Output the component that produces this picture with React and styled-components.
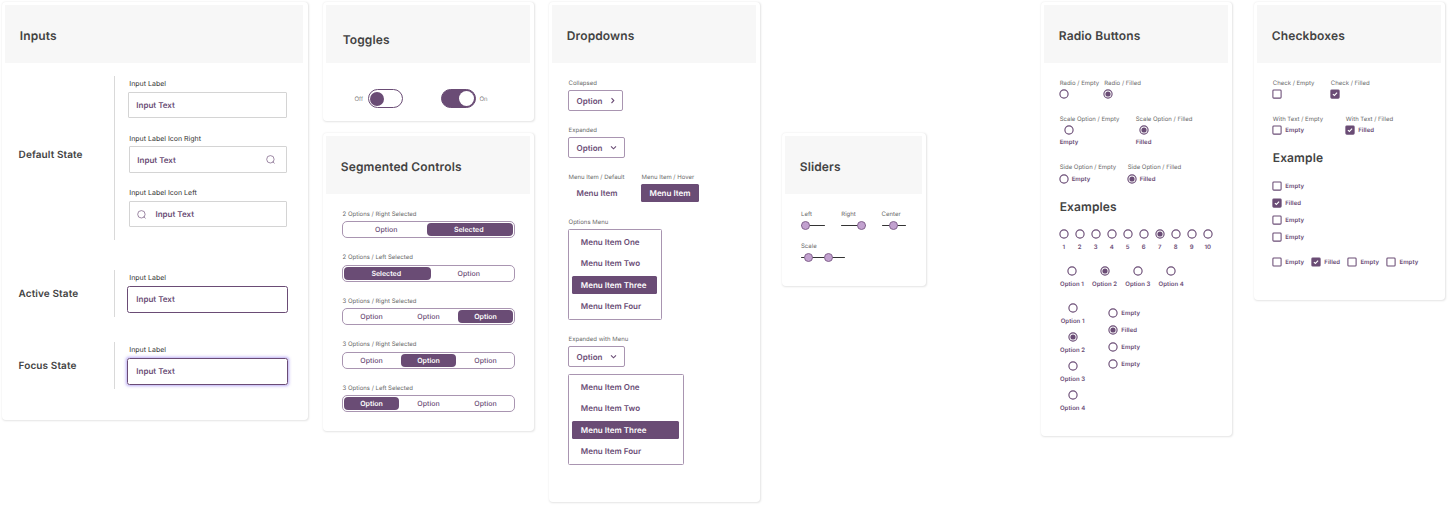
import React from "react";
import styled, { createGlobalStyle, ThemeProvider, css } from "styled-components";

const theme = {
  purple: "#6a4c75",
  outline: "#a995b1",
  lilac: "#c2a1cf",
  ink: "#434343",
  caption: "#6a6a6a",
  line: "#d9d9d9",
};

const GlobalStyle = createGlobalStyle`
  * { box-sizing: border-box; }
  body {
    margin: 0;
    background: #fff;
    font-family: Inter, "Liberation Sans", sans-serif;
    text-rendering: geometricPrecision;
    overflow: hidden;
  }
`;

/* ---------- page and cards ---------- */

const Page = styled.main`
  display: flex;
  align-items: flex-start;
  width: 1448px;
  height: 505px;
  padding: 2px 3px 0 2px;
  white-space: nowrap;
`;

const Column = styled.div`
  display: flex;
  flex-direction: column;
  gap: 12px;
  flex: none;
  width: ${(p) => p.$width}px;
  margin-left: ${(p) => p.$gap || 0}px;
  margin-top: ${(p) => p.$drop || 0}px;
`;

const Card = styled.section`
  height: ${(p) => p.$height}px;
  padding: 3px ${(p) => p.$right || 4}px 0 3px;
  background: #fff;
  border-radius: 4px;
  box-shadow: 0.8px 0.8px 2px rgba(0, 0, 0, 0.11);
`;

const CardHeader = styled.header`
  display: flex;
  align-items: center;
  height: 58px;
  padding: ${(p) => (p.$low ? "12px 0 0 16.7px" : "3px 0 0 14.8px")};
  background: #f7f7f7;
`;

const Title = styled.h2`
  margin: 0;
  font-size: 12px;
  line-height: 14px;
  font-weight: 600;
  letter-spacing: 0.12px;
  color: ${(p) => p.theme.ink};
`;

const ExampleTitle = styled(Title)`
  margin: ${(p) => p.$top}px 0 ${(p) => p.$bottom}px;
`;

const Caption = styled.div`
  height: 10px;
  font-size: 6px;
  line-height: 12px;
  font-weight: 400;
  color: ${(p) => p.theme.caption};
`;

/* ---------- inputs ---------- */

const StateGroup = styled.div`
  display: flex;
  height: ${(p) => p.$height}px;
  margin-top: ${(p) => p.$top}px;
`;

const StateName = styled.h3`
  display: flex;
  align-items: center;
  width: 109px;
  margin: 0;
  padding: 1.4px 0 ${(p) => p.$lift || 0}px 13.6px;
  font-size: 10px;
  line-height: 12px;
  font-weight: 600;
  letter-spacing: 0.1px;
  color: ${(p) => p.theme.ink};
`;

const Fields = styled.div`
  display: flex;
  flex-direction: column;
  border-left: 1px solid ${(p) => p.theme.line};
  padding: 2px 0 0 12px;
`;

const Field = styled.label`
  display: block;
  margin-top: ${(p) => p.$top || 0}px;
`;

const FieldLabel = styled.span`
  display: block;
  height: 10px;
  padding-left: 2.3px;
  font-size: 7px;
  line-height: 12px;
  font-weight: 400;
  color: #333;
`;

const InputBox = styled.span`
  display: flex;
  align-items: center;
  width: ${(p) => (p.$icon ? 158 : 159)}px;
  height: ${(p) => p.$height || 26}px;
  margin: ${(p) => p.$gap || 4}px 0 0 ${(p) => (p.$icon ? 2 : 1)}px;
  padding: 0 11px 0 7.3px;
  border: 1px solid #d4d4d4;
  border-radius: 1px;
  font-size: 8px;
  font-weight: 600;
  color: ${(p) => p.theme.purple};
  ${(p) =>
    p.$strong &&
    css`
      width: 161px;
      height: 27px;
      margin-left: 0;
      padding: 0 0 1px 8.3px;
      border-color: ${p.theme.purple};
      border-radius: 2.5px;
    `}
  ${(p) => p.$focus && "box-shadow: 0 0 3px 0.5px rgba(120, 90, 235, 0.5);"}
  ${(p) => p.$icon === "right" && "justify-content: space-between;"}
  ${(p) => p.$icon === "left" && "gap: 9.2px;"}
`;

const SearchIcon = () => (
  <svg width="9" height="9" viewBox="0 0 9 9" fill="none" stroke={theme.purple} strokeWidth="0.65">
    <circle cx="4.4" cy="4.3" r="3.7" />
    <path d="M7 6.9 8.4 8.3" strokeLinecap="round" />
  </svg>
);

/* ---------- toggles ---------- */

const ToggleRow = styled.div`
  display: flex;
  align-items: center;
  height: 19px;
  margin-top: 26px;
  padding-left: 28.5px;
`;

const ToggleText = styled.span`
  width: 9px;
  padding-top: 1px;
  font-size: 6px;
  font-weight: 300;
  color: #555;
`;

const Switch = styled.span`
  display: flex;
  justify-content: ${(p) => (p.$on ? "flex-end" : "flex-start")};
  align-items: center;
  width: 34.5px;
  height: 19px;
  margin: ${(p) => (p.$on ? "0 4px 0 38.5px" : "0 0 0 4.5px")};
  padding: 0 1px;
  border: 1px solid ${(p) => p.theme.purple};
  border-radius: 10px;
  background: ${(p) => (p.$on ? p.theme.purple : "#fff")};

  &::after {
    content: "";
    width: ${(p) => (p.$on ? 15 : 14)}px;
    height: ${(p) => (p.$on ? 15 : 14)}px;
    border-radius: 50%;
    background: ${(p) => (p.$on ? "#fff" : p.theme.purple)};
  }
`;

/* ---------- segmented controls ---------- */

const SegmentList = styled.div`
  padding: 14.5px 0 0 16px;
`;

const SegmentBlock = styled.div`
  height: 43.5px;

  ${Caption} {
    padding-left: 0.6px;
  }
`;

const Segments = styled.div`
  display: grid;
  grid-template-columns: repeat(${(p) => p.$count}, 1fr);
  width: 173px;
  height: 17px;
  margin-top: 2.5px;
  padding: ${(p) => (p.$count === 2 ? "1px 4px 1px 2px" : "1px 0")};
  border: 1px solid ${(p) => p.theme.outline};
  border-radius: 5px;
`;

const Segment = styled.span`
  display: flex;
  align-items: center;
  justify-content: center;
  font-size: 7px;
  font-weight: ${(p) => (p.$on ? 600 : 500)};
  color: ${(p) => (p.$on ? "#fff" : p.theme.purple)};
  border-radius: 4px;
  ${(p) => p.$on && `background: ${p.theme.purple};`}
  ${(p) => p.$on && (p.$wide ? "margin: 0 -3px 0 -1px; padding: 0 3px 0 1px;" : "margin: 0 1px;")}
`;

const SEGMENTS = [
  ["2 Options / Right Selected", ["Option", "Selected"], 1],
  ["2 Options / Left Selected", ["Selected", "Option"], 0],
  ["3 Options / Right Selected", ["Option", "Option", "Option"], 2],
  ["3 Options / Right Selected", ["Option", "Option", "Option"], 1],
  ["3 Options / Left Selected", ["Option", "Option", "Option"], 0],
];

/* ---------- dropdowns ---------- */

const DropdownBody = styled.div`
  padding: 15px 0 0 16px;
`;

const DropdownBlock = styled.div`
  margin-bottom: ${(p) => p.$bottom || 14}px;

  ${Caption} {
    padding-left: 0.6px;
    margin-bottom: 2px;
  }
`;

const DropdownButton = styled.span`
  display: flex;
  align-items: center;
  justify-content: space-between;
  width: ${(p) => (p.$open ? 57 : 55)}px;
  height: 21px;
  padding: 0 ${(p) => (p.$open ? 7 : 6)}px 0 7.6px;
  border: 1px solid ${(p) => p.theme.outline};
  border-radius: 2px;
  font-size: 8px;
  font-weight: 600;
  color: ${(p) => p.theme.purple};
`;

const Chevron = ({ open }) => (
  <svg width="7" height="7" viewBox="0 0 7 7" fill="none" stroke={theme.purple} strokeWidth="1.1">
    <path d={open ? "M1 2.4 3.5 4.8 6 2.4" : "M2.5 1.2 4.8 3.6 2.5 6"} />
  </svg>
);

const MenuPair = styled.div`
  display: flex;

  > ${DropdownBlock} {
    width: 73px;
  }
`;

const MenuItem = styled.span`
  display: flex;
  align-items: center;
  height: 18px;
  padding: 0 8.5px;
  border-radius: 1.5px;
  font-size: 8px;
  font-weight: 600;
  color: ${(p) => (p.$on ? "#fff" : p.theme.purple)};
  ${(p) => p.$on && `background: ${p.theme.purple};`}
`;

const LoneItem = styled(MenuItem)`
  width: 57.5px;
`;

const Menu = styled.div`
  display: flex;
  flex-direction: column;
  gap: 3.4px;
  width: ${(p) => p.$width}px;
  height: 91px;
  margin-top: ${(p) => p.$top || 0}px;
  padding: 3px 4px 3px 3.3px;
  border: 1px solid ${(p) => p.theme.outline};
  border-radius: 1.5px;
`;

const OptionsMenu = ({ width, top }) => (
  <Menu $width={width} $top={top}>
    {["One", "Two", "Three", "Four"].map((n) => (
      <MenuItem key={n} $on={n === "Three"}>
        Menu Item {n}
      </MenuItem>
    ))}
  </Menu>
);

/* ---------- sliders ---------- */

const SliderRow = styled.div`
  display: flex;
  padding: ${(p) => p.$top}px 0 0 16px;
`;

const SliderCell = styled.div`
  width: 40.3px;
`;

const Track = styled.div`
  position: relative;
  width: ${(p) => p.$width}px;
  height: 1.4px;
  margin-top: 6px;
  border-radius: 1px;
  background: #333;
`;

const Thumb = styled.span`
  position: absolute;
  top: 50%;
  left: ${(p) => p.$at}px;
  width: 9px;
  height: 9px;
  margin: -4.5px 0 0 -4.5px;
  border: 1px solid #84648f;
  border-radius: 50%;
  background: ${(p) => p.theme.lilac};
`;

const Slider = ({ name, width, thumbs }) => (
  <SliderCell>
    <Caption>{name}</Caption>
    <Track $width={width}>
      {thumbs.map((t) => (
        <Thumb key={t} $at={t} />
      ))}
    </Track>
  </SliderCell>
);

/* ---------- radios and checkboxes ---------- */

const Glyph = styled.svg`
  display: block;
  flex: none;
`;

const Radio = ({ on }) => (
  <Glyph width="10" height="10" viewBox="0 0 10 10">
    <circle cx="5" cy="5" r="4.1" fill="none" stroke={theme.purple} strokeWidth="1.15" />
    {on && <circle cx="5" cy="5" r="2.6" fill={theme.purple} />}
  </Glyph>
);

const Check = ({ on }) => (
  <Glyph width="10" height="10" viewBox="0 0 10 10">
    <rect
      x="0.9"
      y="0.9"
      width="8.2"
      height="8.2"
      rx="0.9"
      fill={on ? theme.purple : "none"}
      stroke={theme.purple}
      strokeWidth="1.05"
    />
    {on && <path d="M2.9 5.1 4.4 6.5 7.1 3.7" fill="none" stroke="#fff" strokeWidth="1.1" />}
  </Glyph>
);

const ChoiceBody = styled.div`
  padding: 15px 0 0 ${(p) => p.$left}px;
`;

const SampleRow = styled.div`
  display: flex;
  height: ${(p) => p.$height}px;
`;

const Sample = styled.div`
  width: ${(p) => p.$width}px;
`;

const SampleMark = styled.div`
  margin: ${(p) => p.$top ?? 1}px 0 0 ${(p) => p.$left ?? -1}px;
`;

const ChoiceText = styled.span`
  height: 10px;
  font-size: 6px;
  line-height: 12px;
  font-weight: 600;
  letter-spacing: 0.04px;
  color: ${(p) => p.theme.purple};
`;

const ScaleText = styled(ChoiceText)`
  display: block;
  margin-top: 2.5px;
`;

const SideChoice = styled.div`
  display: flex;
  align-items: center;
  gap: ${(p) => p.$gap || 3}px;
  height: 10px;
`;

const StackedChoice = styled.div`
  display: flex;
  flex-direction: column;
  align-items: center;
  gap: 2.5px;
  ${(p) => p.$width && `width: ${p.$width}px;`}

  ${ChoiceText} {
    line-height: 11px;
  }
`;

const NumberScale = styled.div`
  display: flex;
  margin-left: -4px;
`;

const OptionRow = styled.div`
  display: flex;
  gap: 8.3px;
  margin: 14.5px 0 0 0.3px;
`;

const Columns = styled.div`
  display: flex;
  margin-top: 14.5px;
`;

const OptionColumn = styled.div`
  display: flex;
  flex-direction: column;
  gap: 6.5px;
  width: 48.6px;
  padding-left: 0.4px;
`;

const ChoiceList = styled.div`
  display: flex;
  flex-direction: column;
  gap: 7px;
  margin: ${(p) => p.$top || 0}px 0 0 ${(p) => p.$left || 0}px;
`;

const ChoiceLine = styled.div`
  display: flex;
  gap: ${(p) => p.$gap}px;
  margin: 15px 0 0 -1px;
`;

const FILLED_SECOND = ["Empty", "Filled", "Empty", "Empty"];
const OPTIONS = [1, 2, 3, 4];

export default function App() {
  return (
    <ThemeProvider theme={theme}>
      <GlobalStyle />
      <Page>
        <Column $width={306}>
          <Card $height={418} $right={5}>
            <CardHeader>
              <Title>Inputs</Title>
            </CardHeader>
            <StateGroup $height={164} $top={13}>
              <StateName $lift={7}>Default State</StateName>
              <Fields>
                <Field>
                  <FieldLabel>Input Label</FieldLabel>
                  <InputBox>Input Text</InputBox>
                </Field>
                <Field $top={15}>
                  <FieldLabel>Input Label Icon Right</FieldLabel>
                  <InputBox $icon="right" $height={27} $gap={3}>
                    Input Text
                    <SearchIcon />
                  </InputBox>
                </Field>
                <Field $top={14}>
                  <FieldLabel>Input Label Icon Left</FieldLabel>
                  <InputBox $icon="left">
                    <SearchIcon />
                    Input Text
                  </InputBox>
                </Field>
              </Fields>
            </StateGroup>
            <StateGroup $height={47} $top={30}>
              <StateName>Active State</StateName>
              <Fields>
                <Field>
                  <FieldLabel>Input Label</FieldLabel>
                  <InputBox $strong>Input Text</InputBox>
                </Field>
              </Fields>
            </StateGroup>
            <StateGroup $height={47} $top={25}>
              <StateName>Focus State</StateName>
              <Fields>
                <Field>
                  <FieldLabel>Input Label</FieldLabel>
                  <InputBox $strong $focus>
                    Input Text
                  </InputBox>
                </Field>
              </Fields>
            </StateGroup>
          </Card>
        </Column>

        <Column $width={211} $gap={15}>
          <Card $height={119}>
            <CardHeader $low>
              <Title>Toggles</Title>
            </CardHeader>
            <ToggleRow>
              <ToggleText>Off</ToggleText>
              <Switch />
              <Switch $on />
              <ToggleText>On</ToggleText>
            </ToggleRow>
          </Card>
          <Card $height={298}>
            <CardHeader>
              <Title>Segmented Controls</Title>
            </CardHeader>
            <SegmentList>
              {SEGMENTS.map(([name, items, selected]) => (
                <SegmentBlock key={name + selected}>
                  <Caption>{name}</Caption>
                  <Segments $count={items.length}>
                    {items.map((item, i) => (
                      <Segment key={i} $on={i === selected} $wide={items.length === 2}>
                        {item}
                      </Segment>
                    ))}
                  </Segments>
                </SegmentBlock>
              ))}
            </SegmentList>
          </Card>
        </Column>

        <Column $width={211} $gap={15}>
          <Card $height={500}>
            <CardHeader>
              <Title>Dropdowns</Title>
            </CardHeader>
            <DropdownBody>
              <DropdownBlock>
                <Caption>Collapsed</Caption>
                <DropdownButton>
                  Option
                  <Chevron />
                </DropdownButton>
              </DropdownBlock>
              <DropdownBlock>
                <Caption>Expanded</Caption>
                <DropdownButton $open>
                  Option
                  <Chevron open />
                </DropdownButton>
              </DropdownBlock>
              <MenuPair>
                <DropdownBlock $bottom={15}>
                  <Caption>Menu Item / Default</Caption>
                  <LoneItem>Menu Item</LoneItem>
                </DropdownBlock>
                <DropdownBlock $bottom={15}>
                  <Caption>Menu Item / Hover</Caption>
                  <LoneItem $on>Menu Item</LoneItem>
                </DropdownBlock>
              </MenuPair>
              <DropdownBlock>
                <Caption>Options Menu</Caption>
                <OptionsMenu width={94} />
              </DropdownBlock>
              <DropdownBlock>
                <Caption>Expanded with Menu</Caption>
                <DropdownButton $open>
                  Option
                  <Chevron open />
                </DropdownButton>
                <OptionsMenu width={116} top={7} />
              </DropdownBlock>
            </DropdownBody>
          </Card>
        </Column>

        <Column $width={144} $gap={22} $drop={131}>
          <Card $height={153}>
            <CardHeader>
              <Title>Sliders</Title>
            </CardHeader>
            <SliderRow $top={15}>
              <Slider name="Left" width={24} thumbs={[4.3]} />
              <Slider name="Right" width={25} thumbs={[20]} />
              <Slider name="Center" width={24} thumbs={[12]} />
            </SliderRow>
            <SliderRow $top={14.6}>
              <Slider name="Scale" width={44} thumbs={[7.3, 27.6]} />
            </SliderRow>
          </Card>
        </Column>

        <Column $width={191} $gap={115}>
          <Card $height={434}>
            <CardHeader>
              <Title>Radio Buttons</Title>
            </CardHeader>
            <ChoiceBody $left={15.7}>
              <SampleRow $height={35.5}>
                <Sample $width={44.6}>
                  <Caption>Radio / Empty</Caption>
                  <SampleMark>
                    <Radio />
                  </SampleMark>
                </Sample>
                <Sample $width={50}>
                  <Caption>Radio / Filled</Caption>
                  <SampleMark>
                    <Radio on />
                  </SampleMark>
                </Sample>
              </SampleRow>
              <SampleRow $height={48.5}>
                <Sample $width={76}>
                  <Caption>Scale Option / Empty</Caption>
                  <SampleMark $left={4.5}>
                    <Radio />
                  </SampleMark>
                  <ScaleText>Empty</ScaleText>
                </Sample>
                <Sample $width={70}>
                  <Caption>Scale Option / Filled</Caption>
                  <SampleMark $left={3}>
                    <Radio on />
                  </SampleMark>
                  <ScaleText>Filled</ScaleText>
                </Sample>
              </SampleRow>
              <SampleRow $height={22}>
                <Sample $width={68}>
                  <Caption>Side Option / Empty</Caption>
                  <SampleMark $top={2}>
                    <SideChoice>
                      <Radio />
                      <ChoiceText>Empty</ChoiceText>
                    </SideChoice>
                  </SampleMark>
                </Sample>
                <Sample $width={70}>
                  <Caption>Side Option / Filled</Caption>
                  <SampleMark $top={2}>
                    <SideChoice>
                      <Radio on />
                      <ChoiceText>Filled</ChoiceText>
                    </SideChoice>
                  </SampleMark>
                </Sample>
              </SampleRow>
              <ExampleTitle $top={16} $bottom={15}>
                Examples
              </ExampleTitle>
              <NumberScale>
                {[1, 2, 3, 4, 5, 6, 7, 8, 9, 10].map((n) => (
                  <StackedChoice key={n} $width={16}>
                    <Radio on={n === 7} />
                    <ChoiceText>{n}</ChoiceText>
                  </StackedChoice>
                ))}
              </NumberScale>
              <OptionRow>
                {OPTIONS.map((n) => (
                  <StackedChoice key={n}>
                    <Radio on={n === 2} />
                    <ChoiceText>Option {n}</ChoiceText>
                  </StackedChoice>
                ))}
              </OptionRow>
              <Columns>
                <OptionColumn>
                  {OPTIONS.map((n) => (
                    <StackedChoice key={n} $width={25}>
                      <Radio on={n === 2} />
                      <ChoiceText>Option {n}</ChoiceText>
                    </StackedChoice>
                  ))}
                </OptionColumn>
                <ChoiceList $top={4.5}>
                  {FILLED_SECOND.map((label, i) => (
                    <SideChoice key={i}>
                      <Radio on={i === 1} />
                      <ChoiceText>{label}</ChoiceText>
                    </SideChoice>
                  ))}
                </ChoiceList>
              </Columns>
            </ChoiceBody>
          </Card>
        </Column>

        <Column $width={191} $gap={22}>
          <Card $height={298}>
            <CardHeader>
              <Title>Checkboxes</Title>
            </CardHeader>
            <ChoiceBody $left={15.8}>
              <SampleRow $height={35.5}>
                <Sample $width={58}>
                  <Caption>Check / Empty</Caption>
                  <SampleMark>
                    <Check />
                  </SampleMark>
                </Sample>
                <Sample $width={50}>
                  <Caption>Check / Filled</Caption>
                  <SampleMark>
                    <Check on />
                  </SampleMark>
                </Sample>
              </SampleRow>
              <SampleRow $height={22.5}>
                <Sample $width={73}>
                  <Caption>With Text / Empty</Caption>
                  <SampleMark $top={1.5}>
                    <SideChoice $gap={3.5}>
                      <Check />
                      <ChoiceText>Empty</ChoiceText>
                    </SideChoice>
                  </SampleMark>
                </Sample>
                <Sample $width={70}>
                  <Caption>With Text / Filled</Caption>
                  <SampleMark $top={1.5}>
                    <SideChoice $gap={3.5}>
                      <Check on />
                      <ChoiceText>Filled</ChoiceText>
                    </SideChoice>
                  </SampleMark>
                </Sample>
              </SampleRow>
              <ExampleTitle $top={15} $bottom={16}>
                Example
              </ExampleTitle>
              <ChoiceList $left={-1}>
                {FILLED_SECOND.map((label, i) => (
                  <SideChoice key={i} $gap={3.5}>
                    <Check on={i === 1} />
                    <ChoiceText>{label}</ChoiceText>
                  </SideChoice>
                ))}
              </ChoiceList>
              <ChoiceLine $gap={6.8}>
                {FILLED_SECOND.map((label, i) => (
                  <SideChoice key={i} $gap={3.5}>
                    <Check on={i === 1} />
                    <ChoiceText>{label}</ChoiceText>
                  </SideChoice>
                ))}
              </ChoiceLine>
            </ChoiceBody>
          </Card>
        </Column>
      </Page>
    </ThemeProvider>
  );
}
